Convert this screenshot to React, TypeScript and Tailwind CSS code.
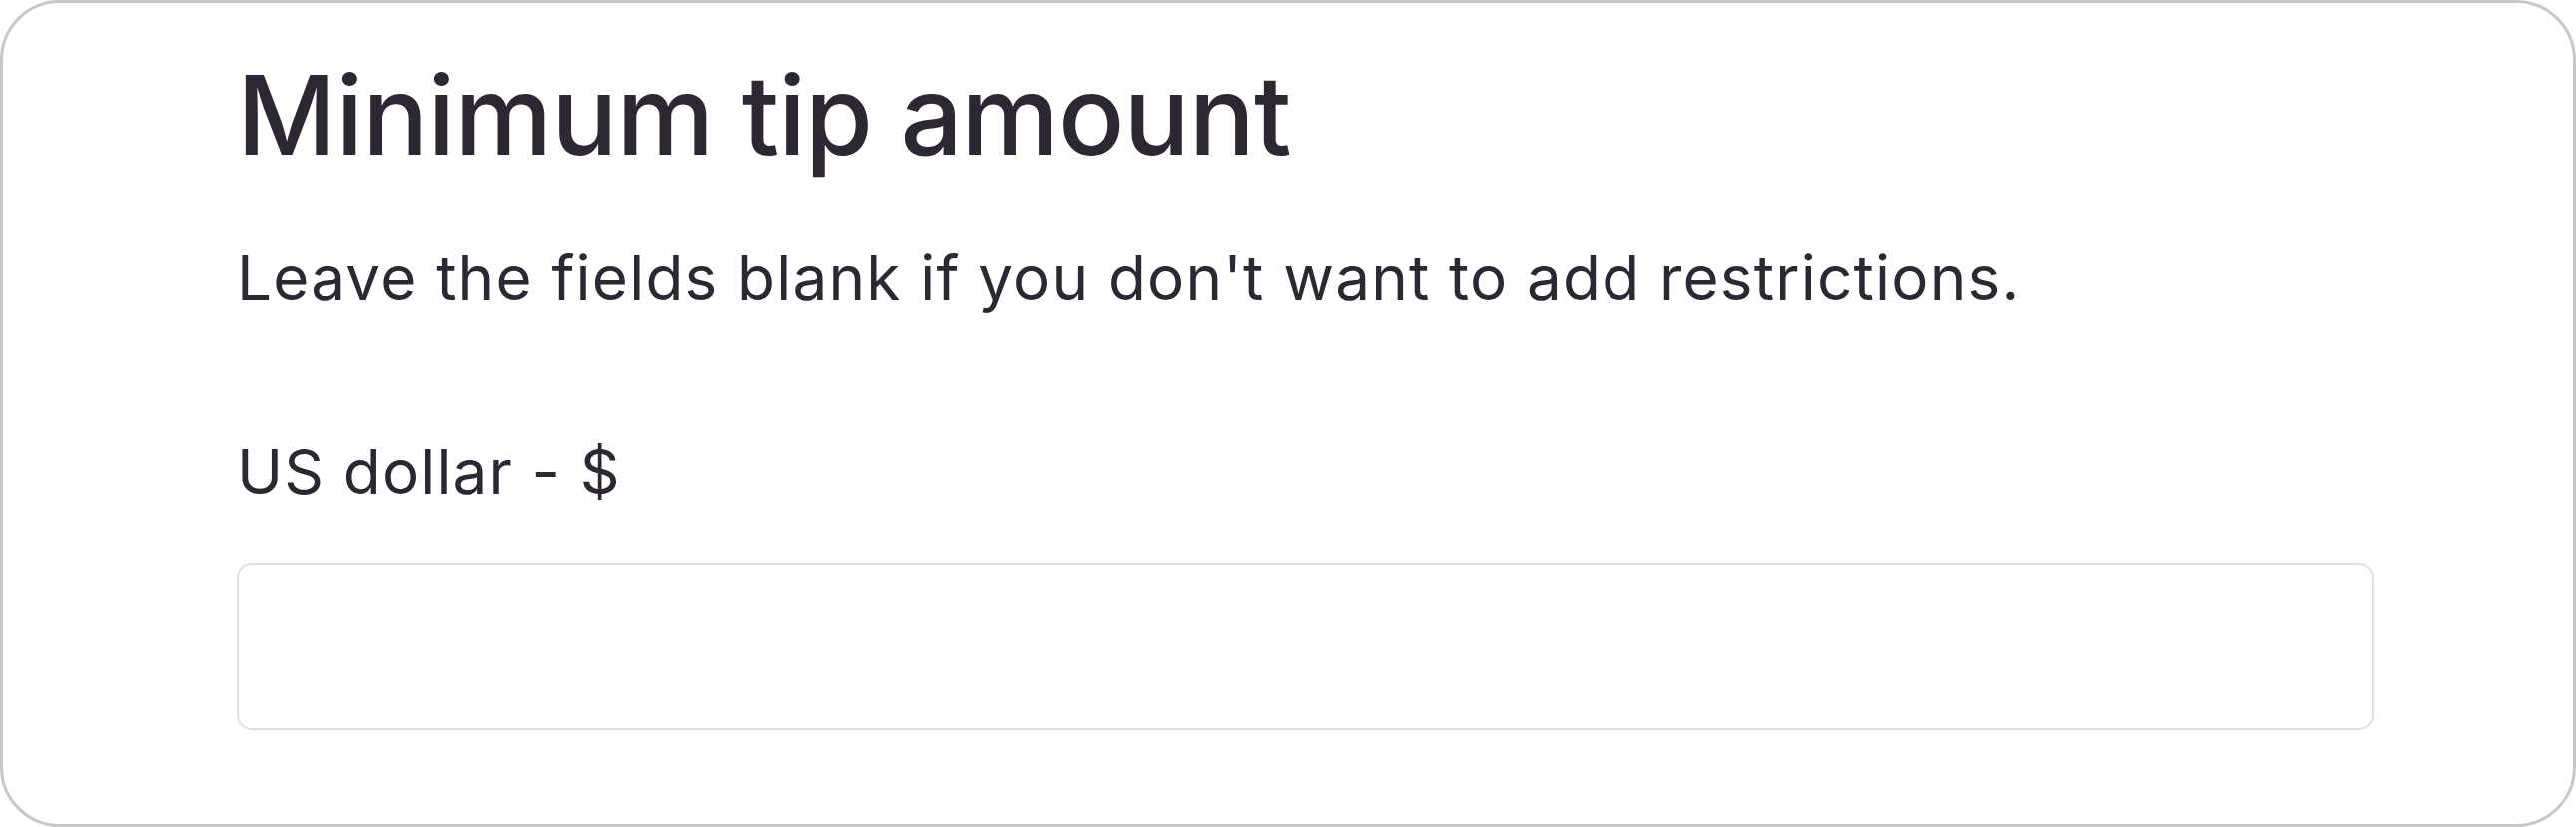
export default function App() {
  return (
    <div className="w-[2580px] h-[828px] bg-white">
      <div className="h-full rounded-[60px] border-[3px] border-[#c8c8c8] bg-white pl-[234px] pr-[199px] pt-[46px] font-['Inter',sans-serif] text-[#2d2733]">
        <h1 className="text-[110px] leading-[133px] font-medium tracking-[-0.9px]">
          Minimum tip amount
        </h1>

        <p className="mt-[59px] text-[62px] leading-[74px] tracking-[1.2px]">
          Leave the fields blank if you don't want to add restrictions.
        </p>

        <label className="mt-[121px] block text-[62px] leading-[74px] tracking-[1.15px]">
          US dollar - $
        </label>

        <input
          type="text"
          className="mt-[54px] block h-[167px] w-full rounded-[15px] border-2 border-[#e0e0e0] bg-white outline-none"
        />
      </div>
    </div>
  );
}
